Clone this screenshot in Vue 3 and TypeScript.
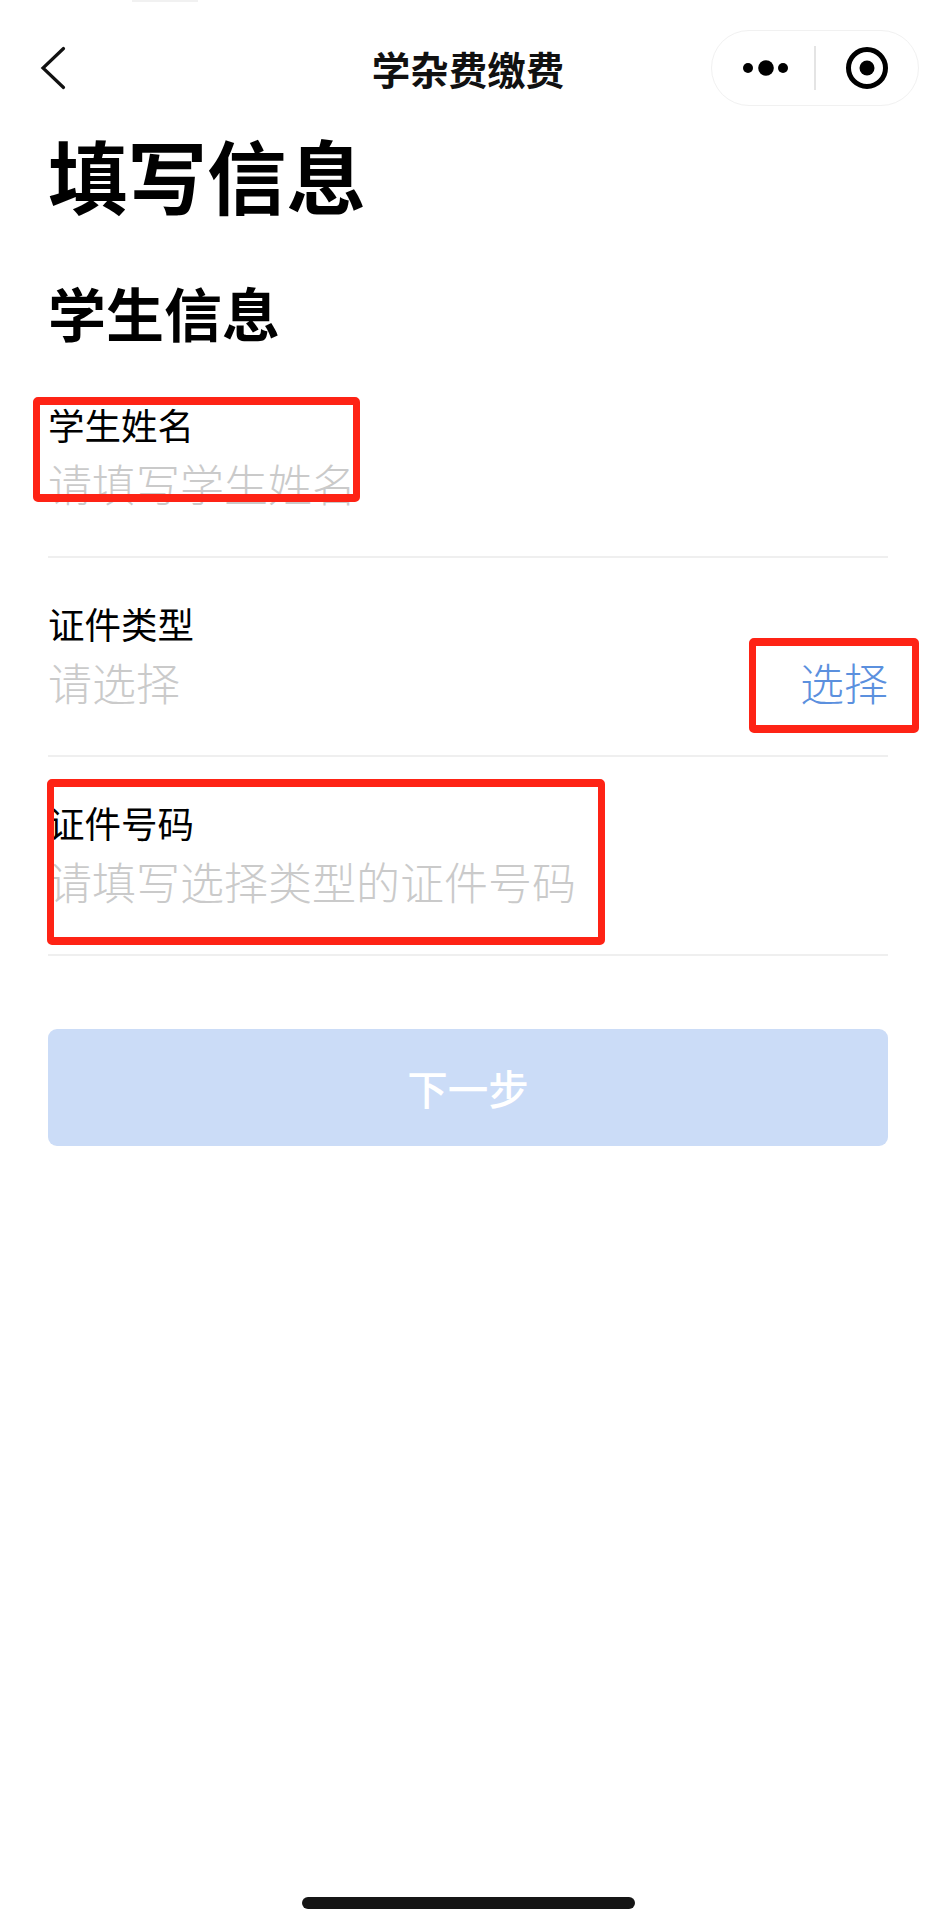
<script setup lang="ts">
interface Field {
  key: string
  label: string
  placeholder: string
  action?: string
}
const fields: Field[] = [
  { key: 'name', label: '学生姓名', placeholder: '请填写学生姓名' },
  { key: 'type', label: '证件类型', placeholder: '请选择', action: '选择' },
  { key: 'id', label: '证件号码', placeholder: '请填写选择类型的证件号码' },
]
</script>

<template>
  <div class="page">
    <div class="notch"></div>
    <header class="nav">
      <svg class="back" width="26" height="44" viewBox="0 0 26 44" fill="none">
        <path d="M23.5 2.5 3 22l20.5 19.5" stroke="#111" stroke-width="3.2" stroke-linecap="round" stroke-linejoin="miter" />
      </svg>
      <div class="nav-title">学杂费缴费</div>
      <div class="capsule">
        <svg class="dots" width="52" height="20" viewBox="0 0 52 20">
          <circle cx="6" cy="10" r="5" fill="#000" />
          <circle cx="24" cy="10" r="7.8" fill="#000" />
          <circle cx="41" cy="10" r="5" fill="#000" />
        </svg>
        <span class="capsule-line"></span>
        <svg class="target" width="44" height="44" viewBox="0 0 44 44">
          <circle cx="22" cy="22" r="18.5" fill="none" stroke="#000" stroke-width="5" />
          <circle cx="22" cy="22" r="7.5" fill="#000" />
        </svg>
      </div>
    </header>

    <main class="content">
      <h1 class="title">填写信息</h1>
      <h2 class="section">学生信息</h2>
      <section class="form">
        <div v-for="f in fields" :key="f.key" class="field">
          <div class="label">{{ f.label }}</div>
          <div class="value-row">
            <span class="placeholder">{{ f.placeholder }}</span>
            <span v-if="f.action" class="action">{{ f.action }}</span>
          </div>
          <div class="mark" :class="'mark-' + f.key"></div>
        </div>
      </section>
      <button class="next" type="button">下一步</button>
    </main>

    <div class="home-bar"></div>
  </div>
</template>

<style>
html, body { margin: 0; background: #fff; }
</style>

<style scoped>
.page {
  position: relative;
  width: 936px;
  height: 1925px;
  background: #fff;
  overflow: hidden;
  font-family: "Noto Sans CJK SC", "Noto Sans", sans-serif;
}
.notch {
  position: absolute;
  top: 0;
  left: 132px;
  width: 66px;
  height: 2px;
  background: #f1f1f1;
}
.nav {
  display: grid;
  grid-template-columns: minmax(0, 1fr) auto minmax(0, 1fr);
  align-items: center;
  padding: 30px 17px 0 17px;
  height: 76px;
}
.back { justify-self: start; margin-left: 23px; }
.nav-title {
  font-size: 38.5px;
  line-height: 76px;
  font-weight: 700;
  color: #111;
}
.capsule {
  justify-self: end;
  box-sizing: border-box;
  width: 208px;
  height: 76px;
  border: 1.5px solid #f1f1f1;
  border-radius: 38px;
  display: flex;
  align-items: center;
  padding-left: 30px;
}
.capsule-line {
  width: 1.5px;
  height: 44px;
  background: #e4e4e4;
  margin: 0 29px 0 20px;
}
.content { padding: 0 48px; }
.title {
  margin: 18px 0 0;
  font-size: 79.5px;
  line-height: 100px;
  font-weight: 700;
  color: #000;
}
.section {
  margin: 50px 0 0;
  font-size: 58px;
  line-height: 76px;
  font-weight: 700;
  color: #000;
}
.form { margin-top: 9px; }
.field {
  position: relative;
  box-sizing: border-box;
  height: 199px;
  padding-top: 42px;
  border-bottom: 2px solid #efefef;
}
.label {
  font-size: 36.5px;
  line-height: 48px;
  color: #000;
}
.value-row {
  display: flex;
  justify-content: space-between;
  margin-top: 4px;
  font-size: 44px;
  line-height: 60px;
}
.placeholder { color: #cacaca; font-weight: 300; }
.action { color: #5b90de; font-weight: 300; }
.mark {
  position: absolute;
  box-sizing: border-box;
  border-style: solid;
  border-color: #fe2315;
  border-width: 8px 7px;
  border-radius: 5px;
}
.mark-name { left: -15px; top: 38px; width: 327px; height: 105px; }
.mark-type { left: 701px; top: 80px; width: 170px; height: 95px; }
.mark-id { left: -1px; top: 22px; width: 558px; height: 166px; }
.next {
  display: block;
  width: 100%;
  height: 117px;
  margin-top: 73px;
  border: 0;
  border-radius: 9px;
  background: #cbdcf7;
  color: #fff;
  font: inherit;
  font-size: 40.5px;
  font-weight: 500;
}
.home-bar {
  position: absolute;
  left: 302px;
  top: 1897px;
  width: 333px;
  height: 12px;
  border-radius: 6px;
  background: #151515;
}
</style>
